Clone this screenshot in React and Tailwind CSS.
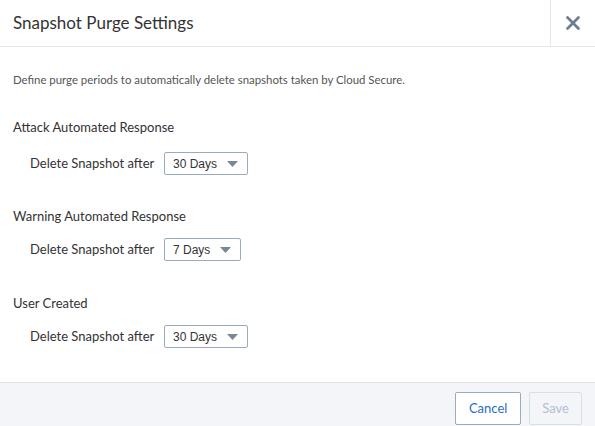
import { X } from "lucide-react";

const font = { fontFamily: "Lato, 'Noto Sans', sans-serif" };

const Select = ({ value, width }) => (
  <div
    className={`flex items-center justify-between h-[23px] border border-[#9aabbe] rounded-[2px] bg-white pl-[8px] pr-[9px] ${width}`}
  >
    <span className="text-[12px] text-[#333] font-['Liberation_Sans',Arial,sans-serif] mt-[1px]">
      {value}
    </span>
    <svg width="11" height="6" viewBox="0 0 11 6">
      <path d="M0 0 L11 0 L5.5 6 Z" fill="#7a8799" />
    </svg>
  </div>
);

const Section = ({ title, value, width, className, rowClass }) => (
  <div className={className}>
    <div className="text-[13px] text-[#333] leading-[16px]">{title}</div>
    <div className={`flex items-center pl-[17px] ${rowClass}`}>
      <span className="text-[13px] text-[#333] w-[134px]">Delete Snapshot after</span>
      <Select value={value} width={width} />
    </div>
  </div>
);

const App = () => {
  return (
    <div className="w-[595px] h-[426px] bg-white flex flex-col" style={font}>
      <div className="flex h-[47px] border-b border-[#e3e6ea]">
        <div className="flex-1 flex items-center pl-[13px] text-[17px] text-[#333]">
          Snapshot Purge Settings
        </div>
        <div className="w-[45px] border-l border-[#e3e6ea] flex items-center justify-center">
          <X size={22} strokeWidth={3} color="#6f7d8f" />
        </div>
      </div>

      <div className="flex-1 px-[13px]">
        <p className="text-[11.4px] text-[#555] mt-[24px]">
          Define purge periods to automatically delete snapshots taken by Cloud Secure.
        </p>
        <Section
          className="mt-[31px]"
          rowClass="mt-[17px]"
          title="Attack Automated Response"
          value="30 Days"
          width="w-[84px]"
        />
        <Section
          className="mt-[33px]"
          rowClass="mt-[14px]"
          title="Warning Automated Response"
          value="7 Days"
          width="w-[77px]"
        />
        <Section
          className="mt-[34px]"
          rowClass="mt-[14px]"
          title="User Created"
          value="30 Days"
          width="w-[84px]"
        />
      </div>

      <div className="h-[44px] bg-[#f3f5f8] border-t border-[#dfe4ea] flex items-start justify-end gap-[8px] pr-[13px] pt-[9px]">
        <button className="h-[33px] px-[13px] bg-white border border-[#9aabbe] rounded-[2px] text-[13px] text-[#1f6fc5]">
          Cancel
        </button>
        <button className="h-[33px] px-[12px] bg-[#f3f5f8] border border-[#d8dfe7] rounded-[2px] text-[13px] text-[#b3c0cf]">
          Save
        </button>
      </div>
    </div>
  );
};

export default App;
